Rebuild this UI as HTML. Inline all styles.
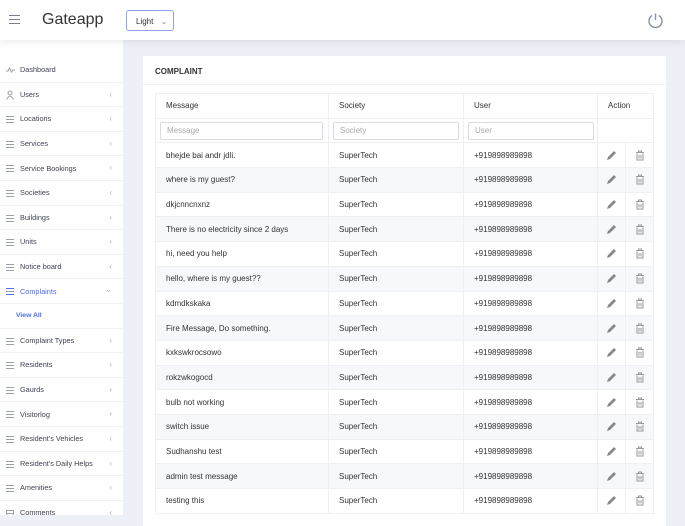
<!DOCTYPE html>
<html><head><meta charset="utf-8"><style>
*{box-sizing:border-box;margin:0;padding:0}
body{width:685px;height:515px;overflow:hidden;background:#edf0f7;font-family:"Liberation Sans",sans-serif;font-size:8px;color:#3f4254;position:relative}
.hdr{position:absolute;left:0;top:0;width:685px;height:40px;background:#fff;box-shadow:0 2px 8px rgba(0,0,0,.08);z-index:2}
.side{position:absolute;left:0;top:40px;width:123px;height:475px;background:#fff;overflow:hidden}
.item{position:absolute;left:0;width:123px;height:24.6px;border-bottom:1px solid #f1f2f6;display:flex;align-items:center;padding-left:20px;font-size:7.3px;color:#3f4254}
.ic{position:absolute;left:6px;top:9px;width:8px;height:7px;border-top:1px solid #9aa0ac;border-bottom:1px solid #9aa0ac}
.ic:after{content:"";position:absolute;left:0;right:0;top:2px;border-top:1px solid #9aa0ac}
.ch{position:absolute;right:11px;top:7px;color:#aab;font-size:8px}
.card{position:absolute;left:143px;top:56px;width:523px;height:470px;background:#fff}
table{position:absolute;left:12px;top:37px;width:499px;border-collapse:collapse;font-size:8px}
td{border:1px solid #eef0f5;height:24.7px;padding-left:10px;color:#333}
tr.s td{background:#f7f8fc}
td.e,td.d{padding:0;text-align:center;width:28px}
td svg{display:block;margin:0 auto}
input{width:163px;height:18px;border:1px solid #d8dbe2;border-radius:2px;font:8px "Liberation Sans",sans-serif;padding-left:6px;color:#aaa}
</style></head><body>
<div class="hdr">
 <div style="position:absolute;left:9px;top:15px;width:11px;height:9px;border-top:1.5px solid #7a8090;border-bottom:1.5px solid #7a8090"><div style="margin-top:2.5px;border-top:1.5px solid #7a8090"></div></div>
 <div style="position:absolute;left:42px;top:11px;font-size:16px;color:#333">Gateapp</div>
 <div style="position:absolute;left:126px;top:10px;width:48px;height:21px;border:1px solid #8ea3e8;border-radius:3px;font-size:8px;padding:6px 0 0 9px;color:#333">Light <span style="margin-left:5px;color:#888">⌄</span></div>
 <svg style="position:absolute;left:647px;top:12px" width="17" height="17" viewBox="0 0 17 17"><path d="M5 3.5A6.5 6.5 0 1 0 12 3.5" fill="none" stroke="#8a92a8" stroke-width="1.4"/><path d="M8.5 1.5V8" stroke="#8a92a8" stroke-width="1.4"/></svg>
</div>
<div class="side">
<div class="item" style="top:18px">Dashboard<svg style="position:absolute;left:6px;top:9px" width="9" height="6"><path d="M0 4L2 4L3.5 1L5.5 5L7 3L9 3" fill="none" stroke="#9aa0ac"/></svg></div>
<div class="item" style="top:42.6px">Users<svg style="position:absolute;left:6px;top:7px" width="8" height="10"><circle cx="4" cy="3" r="2" fill="none" stroke="#9aa0ac"/><path d="M0.5 9.5Q4 3 7.5 9.5" fill="none" stroke="#9aa0ac"/></svg><span class="ch">‹</span></div>
<div class="item" style="top:67.2px"><i class="ic"></i>Locations<span class="ch">‹</span></div>
<div class="item" style="top:91.8px"><i class="ic"></i>Services<span class="ch">‹</span></div>
<div class="item" style="top:116.4px"><i class="ic"></i>Service Bookings<span class="ch">‹</span></div>
<div class="item" style="top:141px"><i class="ic"></i>Societies<span class="ch">‹</span></div>
<div class="item" style="top:165.6px"><i class="ic"></i>Buildings<span class="ch">‹</span></div>
<div class="item" style="top:190.2px"><i class="ic"></i>Units<span class="ch">‹</span></div>
<div class="item" style="top:214.8px"><i class="ic"></i>Notice board<span class="ch">‹</span></div>
<div class="item" style="top:239.4px;color:#4f6ee8"><i class="ic" style="border-color:#4f6ee8"></i>Complaints<span class="ch" style="top:6px">⌄</span></div>
<div class="item" style="top:264px;padding-left:16px;color:#4f6ee8;font-weight:bold;font-size:6.8px">View All</div>
<div class="item" style="top:288.6px"><i class="ic"></i>Complaint Types<span class="ch">‹</span></div>
<div class="item" style="top:313.2px"><i class="ic"></i>Residents<span class="ch">‹</span></div>
<div class="item" style="top:337.8px"><i class="ic"></i>Gaurds<span class="ch">‹</span></div>
<div class="item" style="top:362.4px"><i class="ic"></i>Visitorlog<span class="ch">‹</span></div>
<div class="item" style="top:387px"><i class="ic"></i>Resident's Vehicles<span class="ch">‹</span></div>
<div class="item" style="top:411.6px"><i class="ic"></i>Resident's Daily Helps<span class="ch">‹</span></div>
<div class="item" style="top:436.2px"><i class="ic"></i>Amenities<span class="ch">‹</span></div>
<div class="item" style="top:460.8px"><i class="ic" style="border:1px solid #9aa0ac;height:7px"></i>Comments<span class="ch">‹</span></div>
</div>
<div class="card">
<div style="position:absolute;left:12px;top:11px;font-size:8px;font-weight:bold;color:#333">COMPLAINT</div>
<div style="position:absolute;left:0;right:0;top:28px;border-top:1px solid #f0f1f5"></div>
<table>
<tr><td style="width:173px">Message</td><td style="width:135px">Society</td><td style="width:134px">User</td><td colspan="2">Action</td></tr>
<tr><td style="padding-left:4px"><input value="Message"></td><td style="padding-left:4px"><input style="width:126px" value="Society"></td><td style="padding-left:4px"><input style="width:126px" value="User"></td><td colspan="2"></td></tr>
<tr><td>bhejde bai andr jdli.</td><td>SuperTech</td><td>+919898989898</td><td class="e"><svg width="11" height="11"><path d="M1 10L2 7L8 1L10 3L4 9Z" fill="#888"/></svg></td><td class="d"><svg width="10" height="11"><path d="M1 2.5H9M3.5 2.5V1H6.5V2.5M2 3.5V10H8V3.5M4 5V8.5M6 5V8.5" fill="none" stroke="#999"/></svg></td></tr>
<tr class="s"><td>where is my guest?</td><td>SuperTech</td><td>+919898989898</td><td class="e"><svg width="11" height="11"><path d="M1 10L2 7L8 1L10 3L4 9Z" fill="#888"/></svg></td><td class="d"><svg width="10" height="11"><path d="M1 2.5H9M3.5 2.5V1H6.5V2.5M2 3.5V10H8V3.5M4 5V8.5M6 5V8.5" fill="none" stroke="#999"/></svg></td></tr>
<tr><td>dkjcnncnxnz</td><td>SuperTech</td><td>+919898989898</td><td class="e"><svg width="11" height="11"><path d="M1 10L2 7L8 1L10 3L4 9Z" fill="#888"/></svg></td><td class="d"><svg width="10" height="11"><path d="M1 2.5H9M3.5 2.5V1H6.5V2.5M2 3.5V10H8V3.5M4 5V8.5M6 5V8.5" fill="none" stroke="#999"/></svg></td></tr>
<tr class="s"><td>There is no electricity since 2 days</td><td>SuperTech</td><td>+919898989898</td><td class="e"><svg width="11" height="11"><path d="M1 10L2 7L8 1L10 3L4 9Z" fill="#888"/></svg></td><td class="d"><svg width="10" height="11"><path d="M1 2.5H9M3.5 2.5V1H6.5V2.5M2 3.5V10H8V3.5M4 5V8.5M6 5V8.5" fill="none" stroke="#999"/></svg></td></tr>
<tr><td>hi, need you help</td><td>SuperTech</td><td>+919898989898</td><td class="e"><svg width="11" height="11"><path d="M1 10L2 7L8 1L10 3L4 9Z" fill="#888"/></svg></td><td class="d"><svg width="10" height="11"><path d="M1 2.5H9M3.5 2.5V1H6.5V2.5M2 3.5V10H8V3.5M4 5V8.5M6 5V8.5" fill="none" stroke="#999"/></svg></td></tr>
<tr class="s"><td>hello, where is my guest??</td><td>SuperTech</td><td>+919898989898</td><td class="e"><svg width="11" height="11"><path d="M1 10L2 7L8 1L10 3L4 9Z" fill="#888"/></svg></td><td class="d"><svg width="10" height="11"><path d="M1 2.5H9M3.5 2.5V1H6.5V2.5M2 3.5V10H8V3.5M4 5V8.5M6 5V8.5" fill="none" stroke="#999"/></svg></td></tr>
<tr><td>kdmdkskaka</td><td>SuperTech</td><td>+919898989898</td><td class="e"><svg width="11" height="11"><path d="M1 10L2 7L8 1L10 3L4 9Z" fill="#888"/></svg></td><td class="d"><svg width="10" height="11"><path d="M1 2.5H9M3.5 2.5V1H6.5V2.5M2 3.5V10H8V3.5M4 5V8.5M6 5V8.5" fill="none" stroke="#999"/></svg></td></tr>
<tr class="s"><td>Fire Message, Do something.</td><td>SuperTech</td><td>+919898989898</td><td class="e"><svg width="11" height="11"><path d="M1 10L2 7L8 1L10 3L4 9Z" fill="#888"/></svg></td><td class="d"><svg width="10" height="11"><path d="M1 2.5H9M3.5 2.5V1H6.5V2.5M2 3.5V10H8V3.5M4 5V8.5M6 5V8.5" fill="none" stroke="#999"/></svg></td></tr>
<tr><td>kxkswkrocsowo</td><td>SuperTech</td><td>+919898989898</td><td class="e"><svg width="11" height="11"><path d="M1 10L2 7L8 1L10 3L4 9Z" fill="#888"/></svg></td><td class="d"><svg width="10" height="11"><path d="M1 2.5H9M3.5 2.5V1H6.5V2.5M2 3.5V10H8V3.5M4 5V8.5M6 5V8.5" fill="none" stroke="#999"/></svg></td></tr>
<tr class="s"><td>rokzwkogocd</td><td>SuperTech</td><td>+919898989898</td><td class="e"><svg width="11" height="11"><path d="M1 10L2 7L8 1L10 3L4 9Z" fill="#888"/></svg></td><td class="d"><svg width="10" height="11"><path d="M1 2.5H9M3.5 2.5V1H6.5V2.5M2 3.5V10H8V3.5M4 5V8.5M6 5V8.5" fill="none" stroke="#999"/></svg></td></tr>
<tr><td>bulb not working</td><td>SuperTech</td><td>+919898989898</td><td class="e"><svg width="11" height="11"><path d="M1 10L2 7L8 1L10 3L4 9Z" fill="#888"/></svg></td><td class="d"><svg width="10" height="11"><path d="M1 2.5H9M3.5 2.5V1H6.5V2.5M2 3.5V10H8V3.5M4 5V8.5M6 5V8.5" fill="none" stroke="#999"/></svg></td></tr>
<tr class="s"><td>switch issue</td><td>SuperTech</td><td>+919898989898</td><td class="e"><svg width="11" height="11"><path d="M1 10L2 7L8 1L10 3L4 9Z" fill="#888"/></svg></td><td class="d"><svg width="10" height="11"><path d="M1 2.5H9M3.5 2.5V1H6.5V2.5M2 3.5V10H8V3.5M4 5V8.5M6 5V8.5" fill="none" stroke="#999"/></svg></td></tr>
<tr><td>Sudhanshu test</td><td>SuperTech</td><td>+919898989898</td><td class="e"><svg width="11" height="11"><path d="M1 10L2 7L8 1L10 3L4 9Z" fill="#888"/></svg></td><td class="d"><svg width="10" height="11"><path d="M1 2.5H9M3.5 2.5V1H6.5V2.5M2 3.5V10H8V3.5M4 5V8.5M6 5V8.5" fill="none" stroke="#999"/></svg></td></tr>
<tr class="s"><td>admin test message</td><td>SuperTech</td><td>+919898989898</td><td class="e"><svg width="11" height="11"><path d="M1 10L2 7L8 1L10 3L4 9Z" fill="#888"/></svg></td><td class="d"><svg width="10" height="11"><path d="M1 2.5H9M3.5 2.5V1H6.5V2.5M2 3.5V10H8V3.5M4 5V8.5M6 5V8.5" fill="none" stroke="#999"/></svg></td></tr>
<tr><td>testing this</td><td>SuperTech</td><td>+919898989898</td><td class="e"><svg width="11" height="11"><path d="M1 10L2 7L8 1L10 3L4 9Z" fill="#888"/></svg></td><td class="d"><svg width="10" height="11"><path d="M1 2.5H9M3.5 2.5V1H6.5V2.5M2 3.5V10H8V3.5M4 5V8.5M6 5V8.5" fill="none" stroke="#999"/></svg></td></tr>
</table>
</div>
</body></html>
